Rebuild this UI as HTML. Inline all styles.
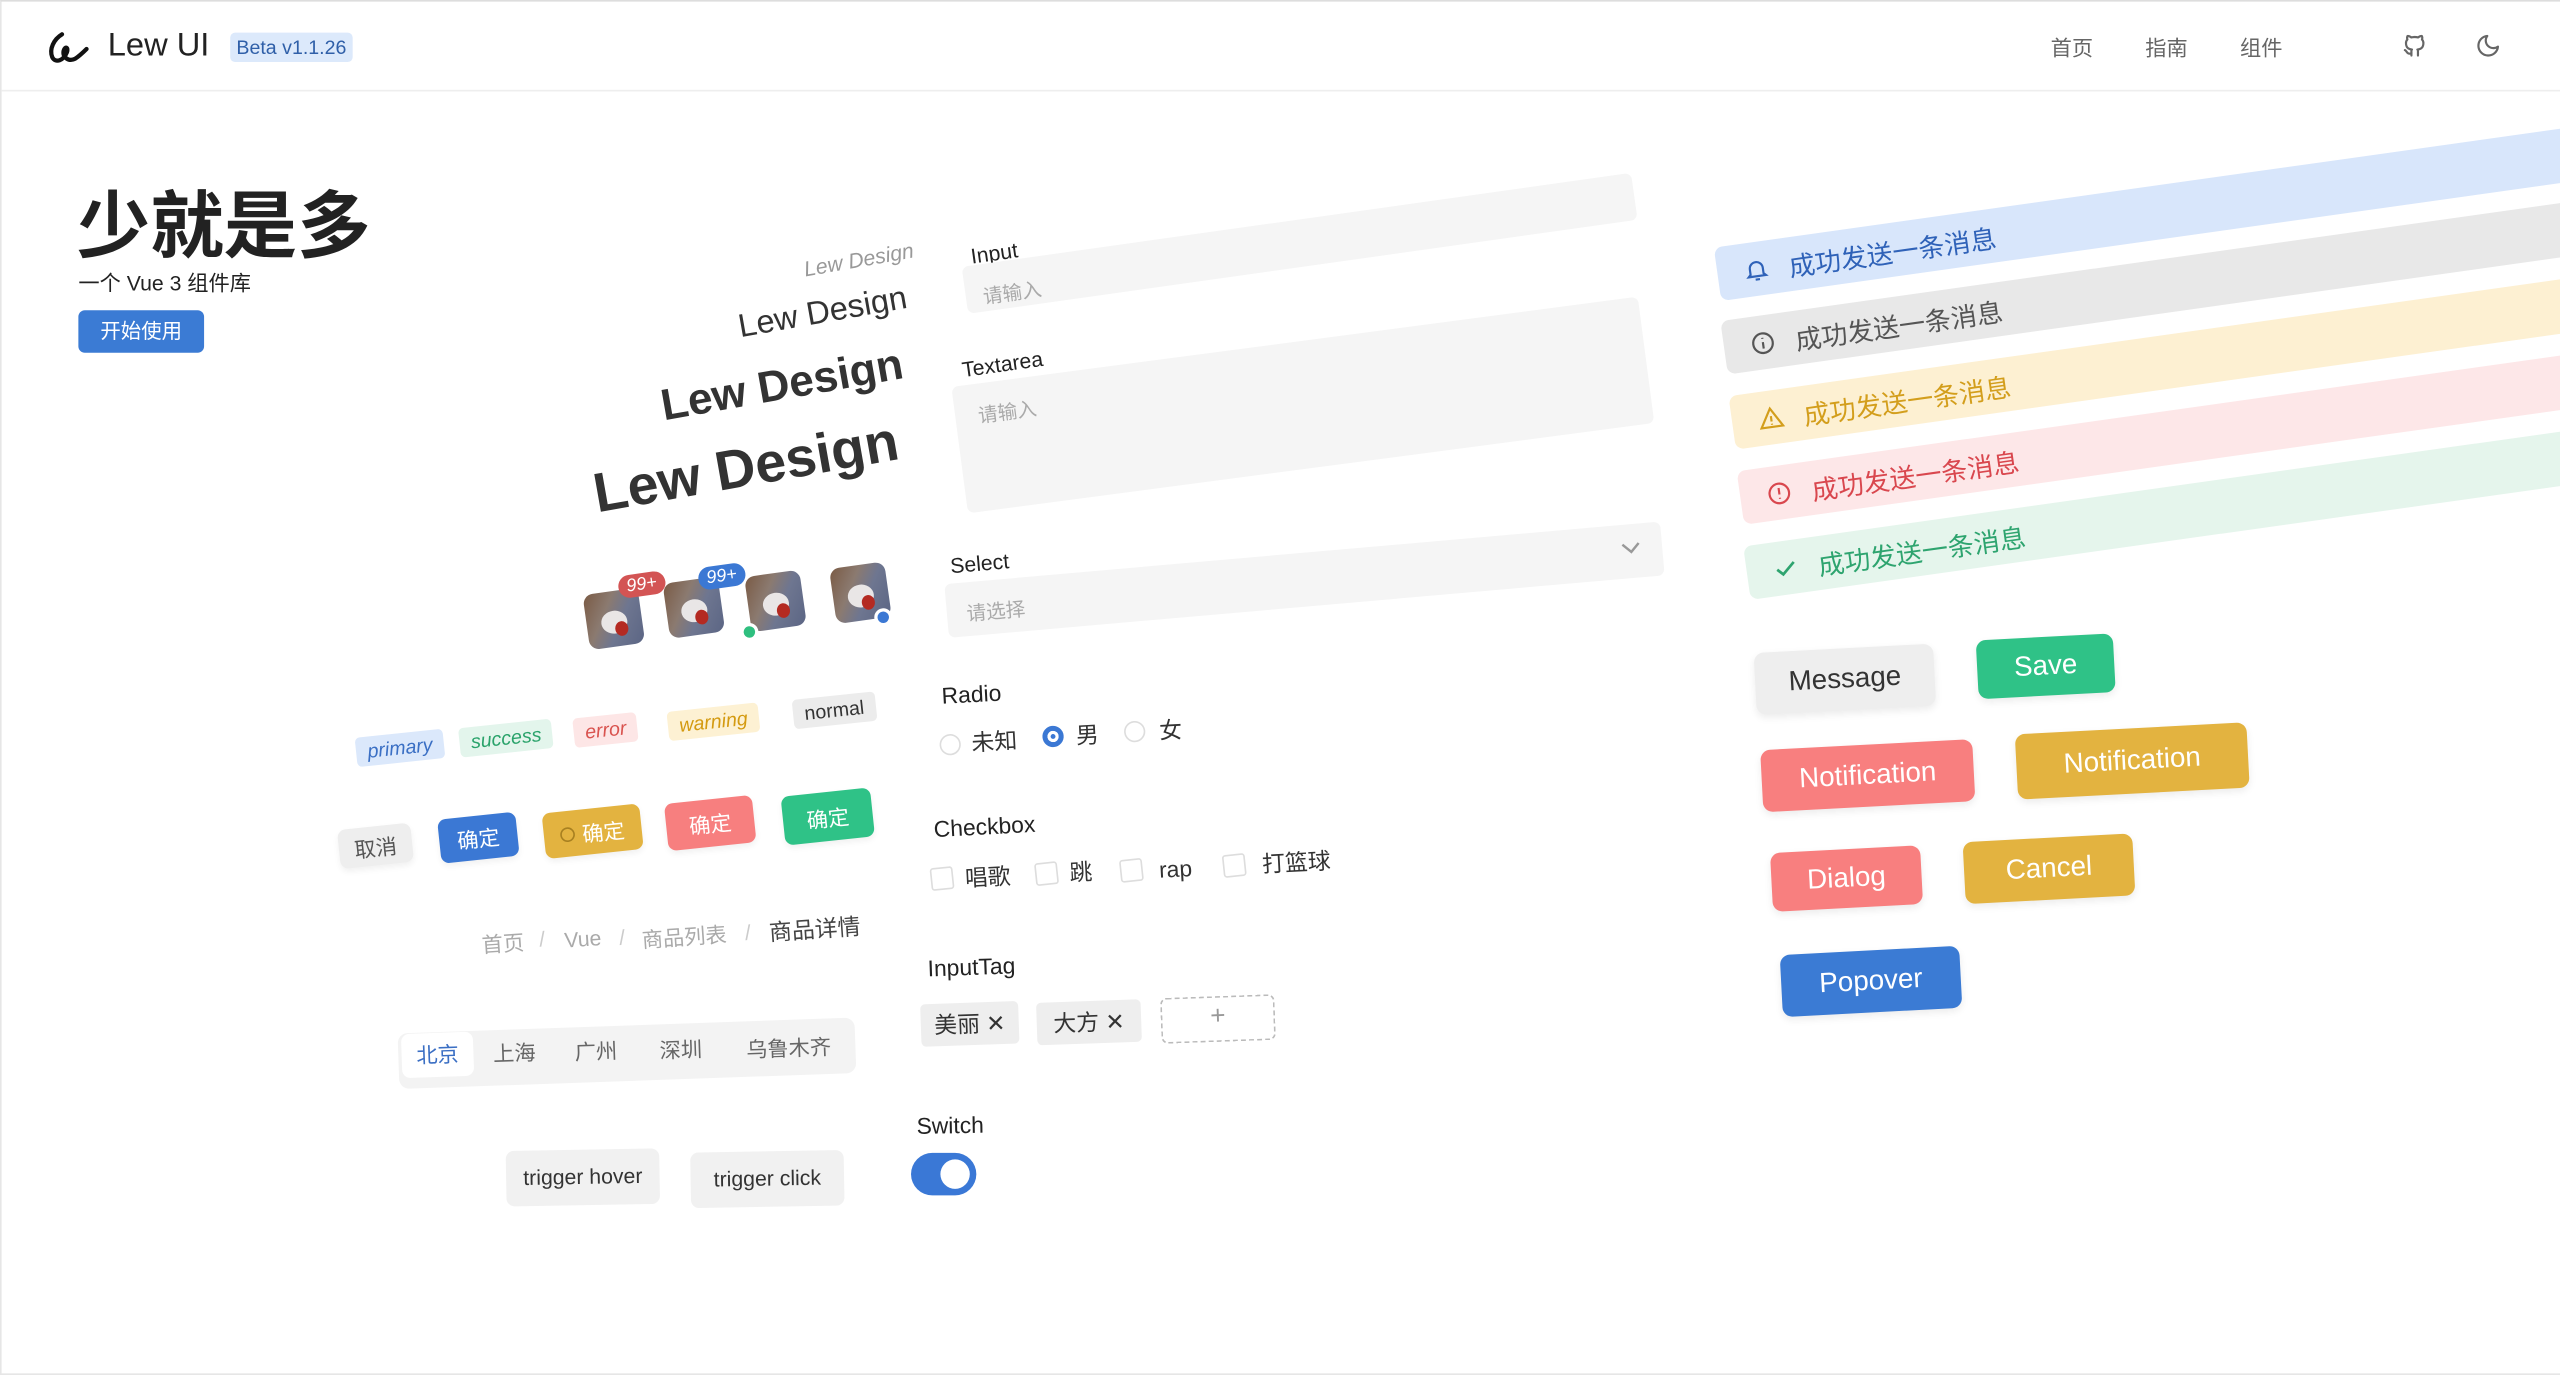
<!DOCTYPE html>
<html><head><meta charset="utf-8">
<style>
*{box-sizing:border-box;margin:0;padding:0}
html,body{width:2560px;height:1375px;overflow:hidden;background:#fff}
#s{position:absolute;left:0;top:0;width:1568px;height:842px;transform:scale(1.63265,1.633);transform-origin:0 0;font-family:"Liberation Sans","Noto Sans CJK SC",sans-serif;color:#333;border-top:1px solid #ddd;border-left:1px solid #e6e6e6;border-bottom:1px solid #e6e6e6}
.a{position:absolute;transform:translate(-50%,-50%) rotate(var(--r,-6deg));white-space:nowrap}
.hd{position:absolute;left:0;top:0;width:1568px;height:55px;border-bottom:1px solid #eee}
.nav{position:absolute;top:18px;font-size:13px;color:#666}
.tag{font-size:12px;font-style:italic;padding:2px 7px;border-radius:3px}
.btn{color:#fff;font-size:13px;border-radius:5px;display:flex;align-items:center;justify-content:center;box-shadow:0 2px 4px rgba(0,0,0,.06)}
.box{background:#f5f5f5;border-radius:4px}
.ph{color:#aaa;font-size:12px}
.lb{font-size:13px;color:#222}
.rc{width:13px;height:13px;border-radius:50%;border:1.5px solid #ddd;background:#fff}
.cb{width:14px;height:14px;border-radius:2px;border:1.5px solid #ddd;background:#fff}
.op{font-size:14px;color:#333}
.bar{position:absolute;height:33px;width:760px;border-radius:5px;transform-origin:0 50%;transform:translateY(-50%) rotate(-8deg);display:flex;align-items:center;font-size:16px}
.bar svg{margin-left:16px;margin-right:12px}
.rb{font-family:"Liberation Sans",sans-serif;font-size:17px;color:#fff;border-radius:6px;display:flex;align-items:center;justify-content:center;--r:-3deg;box-shadow:0 2px 5px rgba(0,0,0,.08)}
.av{width:34px;height:34px;border-radius:6px;background:linear-gradient(120deg,#7a5a44 0%,#8b7a70 35%,#6e7690 60%,#5b6584 100%);overflow:hidden}
.av:before{content:"";position:absolute;left:9px;top:12px;width:16px;height:14px;border-radius:50%;background:#e9e6e6}
.av:after{content:"";position:absolute;left:17px;top:19px;width:8px;height:9px;border-radius:50%;background:#b42a22}
.bd{font-size:11px;font-style:italic;color:#fff;padding:1px 5px;border-radius:9px}
.dot{width:11px;height:11px;border-radius:50%;border:2px solid #fff}
</style></head><body><div id="s">
<div class="hd">
<svg style="position:absolute;left:28px;top:17px" width="28" height="22" viewBox="0 0 28 22"><path d="M9 3 C4 6 1 12 3 17 C5 21 10 19 12 14 C13 11 11 10 10 13 C9 17 13 20 17 18 C20 16 22 14 24 12" fill="none" stroke="#111" stroke-width="2.6" stroke-linecap="round"/></svg>
<div style="position:absolute;left:65px;top:16px;font-size:20px;color:#222">Lew UI</div>
<div style="position:absolute;left:140px;top:19px;width:75px;height:18px;background:#dce9fb;color:#2f5fa8;font-size:12px;border-radius:3px;text-align:center;line-height:18px">Beta v1.1.26</div>
<div class="nav" style="left:1255px">首页</div>
<div class="nav" style="left:1313px">指南</div>
<div class="nav" style="left:1371px">组件</div>
<svg style="position:absolute;left:1470px;top:19px" width="16" height="16" viewBox="0 0 24 24" fill="none" stroke="#666" stroke-width="2" stroke-linecap="round" stroke-linejoin="round"><path d="M9 19c-4.3 1.4-4.3-2.5-6-3m12 5v-3.5c0-1 .1-1.4-.5-2 2.8-.3 5.5-1.4 5.5-6a4.6 4.6 0 0 0-1.3-3.2 4.2 4.2 0 0 0-.1-3.2s-1.1-.3-3.5 1.3a12.3 12.3 0 0 0-6.2 0C6.5 2.8 5.4 3.1 5.4 3.1a4.2 4.2 0 0 0-.1 3.2A4.6 4.6 0 0 0 4 9.5c0 4.6 2.7 5.7 5.5 6-.6.6-.6 1.2-.5 2V21"/></svg>
<svg style="position:absolute;left:1515px;top:19px" width="16" height="16" viewBox="0 0 24 24" fill="none" stroke="#666" stroke-width="2" stroke-linecap="round" stroke-linejoin="round"><path d="M21 12.8A9 9 0 1 1 11.2 3a7 7 0 0 0 9.8 9.8z"/></svg>
</div>

<div style="position:absolute;left:46px;top:106px;font-size:45px;font-weight:bold;color:#222;font-family:'Noto Sans CJK SC',sans-serif;line-height:56px">少就是多</div>
<div style="position:absolute;left:47px;top:162px;font-size:13px;color:#222">一个 Vue 3 组件库</div>
<div style="position:absolute;left:47px;top:189px;width:77px;height:26px;background:#3b7bd4;color:#fff;border-radius:4px;font-size:12.5px;text-align:center;line-height:26px">开始使用</div>

<div class="a" style="left:525px;top:158px;font-size:13px;color:#999;--r:-10deg;font-style:italic">Lew Design</div>
<div class="a" style="left:503px;top:191px;font-size:20px;color:#333;--r:-10deg">Lew Design</div>
<div class="a" style="left:478px;top:235px;font-size:27px;font-weight:bold;color:#333;--r:-10deg">Lew Design</div>
<div class="a" style="left:456px;top:286px;font-size:34px;font-weight:bold;color:#333;--r:-10deg">Lew Design</div>

<div class="a av" style="left:375px;top:378px;--r:-8deg"></div>
<div class="a av" style="left:424px;top:371px;--r:-8deg"></div>
<div class="a av" style="left:474px;top:367px;--r:-8deg"></div>
<div class="a av" style="left:526px;top:362px;--r:-8deg"></div>
<div class="a bd" style="left:392px;top:357px;background:#d35454;--r:-8deg">99+</div>
<div class="a bd" style="left:441px;top:352px;background:#3b78d4;--r:-8deg">99+</div>
<div class="a dot" style="left:458px;top:386px;background:#2fbf7f"></div>
<div class="a dot" style="left:540px;top:377px;background:#3b78d4"></div>

<div class="a tag" style="left:244px;top:457px;background:#dbe8fb;color:#3a6fc4">primary</div>
<div class="a tag" style="left:309px;top:451px;background:#e3f5ec;color:#2aa36b">success</div>
<div class="a tag" style="left:370px;top:446px;background:#fde6e6;color:#d9534f">error</div>
<div class="a tag" style="left:436px;top:441px;background:#fdf1d3;color:#d49a10">warning</div>
<div class="a tag" style="left:510px;top:434px;background:#ececec;color:#333;font-style:normal">normal</div>

<div class="a btn" style="left:229px;top:517px;width:45px;height:24px;background:#eee;color:#555">取消</div>
<div class="a btn" style="left:292px;top:512px;width:48px;height:27px;background:#3b78d4">确定</div>
<div class="a btn" style="left:362px;top:508px;width:60px;height:28px;background:#e3b340"><span style="display:inline-block;width:9px;height:9px;border:1.5px solid #a88020;border-radius:50%;margin-right:4px"></span>确定</div>
<div class="a btn" style="left:434px;top:503px;width:54px;height:29px;background:#f77f7f">确定</div>
<div class="a btn" style="left:506px;top:499px;width:55px;height:30px;background:#2fc287">确定</div>

<div class="a" style="left:307px;top:576px;font-size:13px;color:#aaa;--r:-4deg">首页</div>
<div class="a" style="left:331px;top:574px;font-size:13px;color:#ccc;--r:-4deg">/</div>
<div class="a" style="left:356px;top:574px;font-size:13px;color:#aaa;--r:-4deg">Vue</div>
<div class="a" style="left:380px;top:573px;font-size:13px;color:#ccc;--r:-4deg">/</div>
<div class="a" style="left:418px;top:572px;font-size:13px;color:#aaa;--r:-4deg">商品列表</div>
<div class="a" style="left:457px;top:570px;font-size:13px;color:#ccc;--r:-4deg">/</div>
<div class="a" style="left:498px;top:568px;font-size:14px;color:#444;--r:-4deg">商品详情</div>

<div class="a" style="left:383px;top:644px;width:280px;height:34px;background:#f3f3f3;border-radius:6px;--r:-2deg"></div>
<div class="a" style="left:267px;top:645px;width:44px;height:27px;background:#fff;border-radius:5px;--r:-2deg;font-size:13px;color:#3b6fc4;text-align:center;line-height:27px">北京</div>
<div class="a" style="left:314px;top:643px;font-size:13px;color:#666;--r:-2deg">上海</div>
<div class="a" style="left:364px;top:642px;font-size:13px;color:#666;--r:-2deg">广州</div>
<div class="a" style="left:416px;top:641px;font-size:13px;color:#666;--r:-2deg">深圳</div>
<div class="a" style="left:482px;top:640px;font-size:13px;color:#666;--r:-2deg">乌鲁木齐</div>

<div class="a" style="left:356px;top:720px;width:94px;height:34px;background:#f1f1f1;border-radius:5px;--r:-1deg;font-size:13px;color:#333;text-align:center;line-height:34px">trigger hover</div>
<div class="a" style="left:469px;top:721px;width:94px;height:34px;background:#f1f1f1;border-radius:5px;--r:-1deg;font-size:13px;color:#333;text-align:center;line-height:34px">trigger click</div>

<div class="a lb" style="left:608px;top:154px;--r:-8deg">Input</div>
<div class="a box" style="left:795px;top:148px;width:414px;height:29px;--r:-8deg"></div>
<div class="a ph" style="left:619px;top:178px;--r:-8deg">请输入</div>
<div class="a lb" style="left:613px;top:222px;--r:-8deg">Textarea</div>
<div class="a box" style="left:797px;top:247px;width:424px;height:78px;--r:-7.5deg"></div>
<div class="a ph" style="left:616px;top:251px;--r:-7.5deg">请输入</div>
<div class="a lb" style="left:599px;top:344px;--r:-5deg">Select</div>
<div class="a box" style="left:798px;top:354px;width:440px;height:33px;--r:-5deg"></div>
<div class="a ph" style="left:609px;top:373px;--r:-5deg">请选择</div>
<svg class="a" style="left:998px;top:335px" width="12" height="8" viewBox="0 0 12 8"><path d="M1 1 L6 6 L11 1" fill="none" stroke="#999" stroke-width="1.5"/></svg>

<div class="a lb" style="left:594px;top:424px;--r:-3deg;font-size:14px">Radio</div>
<div class="a rc" style="left:581px;top:455px"></div><div class="a op" style="left:608px;top:453px;--r:-3deg">未知</div>
<div class="a rc" style="left:644px;top:450px;background:#3b78d4;border:3.5px solid #3b78d4;box-shadow:inset 0 0 0 2px #fff"></div><div class="a op" style="left:665px;top:449px;--r:-3deg">男</div>
<div class="a rc" style="left:694px;top:447px"></div><div class="a op" style="left:716px;top:446px;--r:-3deg">女</div>

<div class="a lb" style="left:602px;top:505px;--r:-3deg;font-size:14px">Checkbox</div>
<div class="a cb" style="left:576px;top:537px"></div><div class="a op" style="left:604px;top:536px;--r:-3deg">唱歌</div>
<div class="a cb" style="left:640px;top:534px"></div><div class="a op" style="left:661px;top:533px;--r:-3deg">跳</div>
<div class="a cb" style="left:692px;top:532px"></div><div class="a op" style="left:719px;top:531px;--r:-3deg">rap</div>
<div class="a cb" style="left:755px;top:529px"></div><div class="a op" style="left:793px;top:527px;--r:-3deg">打篮球</div>

<div class="a lb" style="left:594px;top:591px;--r:-2deg;font-size:14px">InputTag</div>
<div class="a" style="left:593px;top:626px;width:60px;height:26px;background:#eee;border-radius:3px;font-size:14px;line-height:26px;text-align:center;--r:-2deg">美丽 ✕</div>
<div class="a" style="left:666px;top:625px;width:64px;height:26px;background:#eee;border-radius:3px;font-size:14px;line-height:26px;text-align:center;--r:-2deg">大方 ✕</div>
<div class="a" style="left:745px;top:623px;width:70px;height:28px;border:1.5px dashed #bbb;border-radius:4px;font-size:16px;line-height:24px;text-align:center;color:#999;--r:-2deg">+</div>

<div class="a lb" style="left:581px;top:688px;--r:-1deg;font-size:14px">Switch</div>
<div class="a" style="left:577px;top:718px;width:40px;height:26px;background:#3a78d6;border-radius:13px;--r:0deg"><div style="position:absolute;right:4px;top:4px;width:18px;height:18px;border-radius:50%;background:#fff"></div></div>

<div class="bar" style="left:1051px;top:167px;background:#d8e6fb;color:#2f62b8"><svg width="16" height="16" viewBox="0 0 24 24" fill="none" stroke="#2f62b8" stroke-width="2"><path d="M6 16V11a6 6 0 0 1 12 0v5l2 2H4z M10 21h4"/></svg>成功发送一条消息</div>
<div class="bar" style="left:1055px;top:212px;background:#e8e8e8;color:#555"><svg width="16" height="16" viewBox="0 0 24 24" fill="none" stroke="#555" stroke-width="2"><circle cx="12" cy="12" r="9"/><path d="M12 11v6M12 7v1"/></svg>成功发送一条消息</div>
<div class="bar" style="left:1060px;top:258px;background:#fdf0d2;color:#d39e1c"><svg width="16" height="16" viewBox="0 0 24 24" fill="none" stroke="#d39e1c" stroke-width="2"><path d="M12 3 L22 20 H2 Z M12 10v5M12 17v1"/></svg>成功发送一条消息</div>
<div class="bar" style="left:1065px;top:304px;background:#fde7e8;color:#d9474e"><svg width="16" height="16" viewBox="0 0 24 24" fill="none" stroke="#d9474e" stroke-width="2"><circle cx="12" cy="12" r="9"/><path d="M12 7v6M12 16v1"/></svg>成功发送一条消息</div>
<div class="bar" style="left:1069px;top:350px;background:#e5f5ec;color:#2ea46f"><svg width="16" height="16" viewBox="0 0 24 24" fill="none" stroke="#2ea46f" stroke-width="2.5"><path d="M4 12l5 5L20 7"/></svg>成功发送一条消息</div>

<div class="a rb" style="left:1129px;top:415px;width:110px;height:38px;background:#eee;color:#333">Message</div>
<div class="a rb" style="left:1252px;top:407px;width:84px;height:36px;background:#2fc287">Save</div>
<div class="a rb" style="left:1143px;top:474px;width:130px;height:38px;background:#f87f7f">Notification</div>
<div class="a rb" style="left:1305px;top:465px;width:142px;height:40px;background:#e3b340">Notification</div>
<div class="a rb" style="left:1130px;top:537px;width:92px;height:36px;background:#f87f7f">Dialog</div>
<div class="a rb" style="left:1254px;top:531px;width:104px;height:38px;background:#e3b340">Cancel</div>
<div class="a rb" style="left:1145px;top:600px;width:110px;height:38px;background:#3b7bd4">Popover</div>
</div></body></html>
